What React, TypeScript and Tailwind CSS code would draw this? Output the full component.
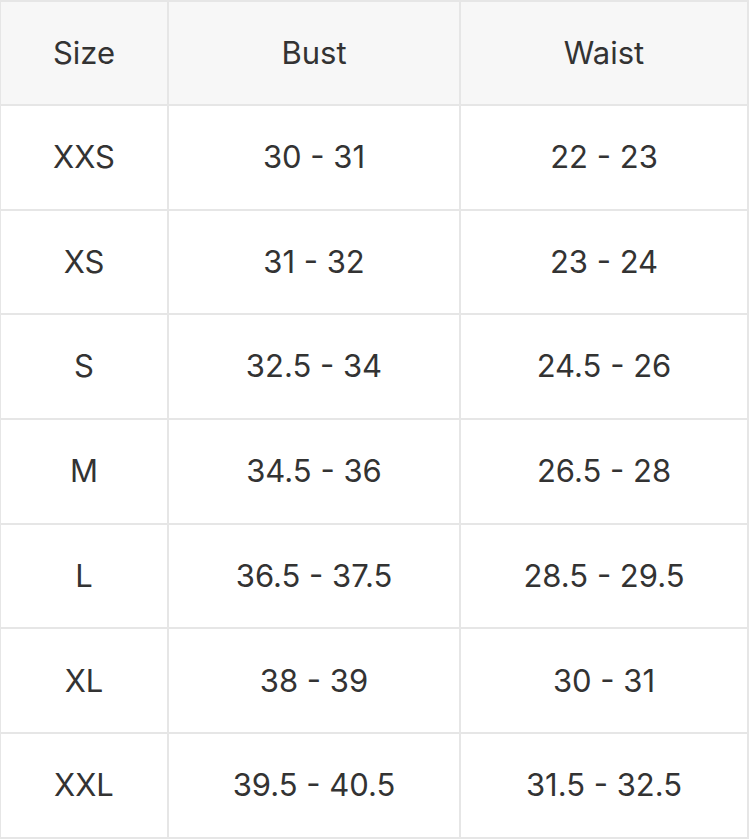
import React from 'react';

const ROWS: [string, string, string][] = [
  ['XXS', '30 - 31', '22 - 23'],
  ['XS', '31 - 32', '23 - 24'],
  ['S', '32.5 - 34', '24.5 - 26'],
  ['M', '34.5 - 36', '26.5 - 28'],
  ['L', '36.5 - 37.5', '28.5 - 29.5'],
  ['XL', '38 - 39', '30 - 31'],
  ['XXL', '39.5 - 40.5', '31.5 - 32.5'],
];

export default function App() {
  return (
    <div className="w-[750px] h-[840px] bg-white overflow-hidden" style={{ fontFamily: 'Inter, "Liberation Sans", sans-serif' }}>
      <table className="table-fixed border-collapse w-[748px] ml-[-1px] text-[31px] text-[#333] text-center">
        <colgroup>
          <col className="w-[168px]" />
          <col className="w-[292px]" />
          <col className="w-[288px]" />
        </colgroup>
        <thead>
          <tr className="bg-[#f7f7f7] h-[104px]">
            <th className="font-normal border-2 border-[#e6e6e6]">Size</th>
            <th className="font-normal border-2 border-[#e6e6e6]">Bust</th>
            <th className="font-normal border-2 border-[#e6e6e6]">Waist</th>
          </tr>
        </thead>
        <tbody>
          {ROWS.map(([size, bust, waist]) => (
            <tr key={size} className="h-[104.7px]">
              <td className="border-2 border-[#e6e6e6]">{size}</td>
              <td className="border-2 border-[#e6e6e6]">{bust}</td>
              <td className="border-2 border-[#e6e6e6]">{waist}</td>
            </tr>
          ))}
        </tbody>
      </table>
    </div>
  );
}
